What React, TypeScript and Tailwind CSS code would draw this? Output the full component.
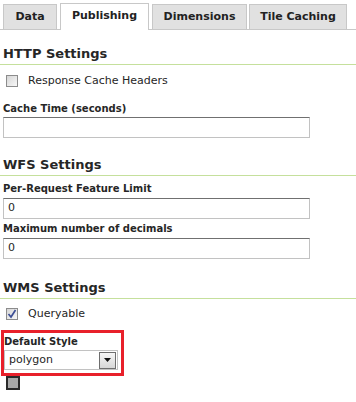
import React from "react";

const font = { fontFamily: '"DejaVu Sans", Verdana, sans-serif' };

function Heading({ children, mt }: { children: React.ReactNode; mt: string }) {
  return (
    <div className={`${mt} border-b border-[#c5e09c] pb-[2px] pl-[3px] text-[13px] font-bold text-[#262626] leading-[17px]`}>
      {children}
    </div>
  );
}

function Label({ children, mt }: { children: React.ReactNode; mt: string }) {
  return <div className={`${mt} pl-[3px] text-[10px] font-bold text-[#262626] leading-[14px]`}>{children}</div>;
}

function Input({ value, mt }: { value?: string; mt: string }) {
  return (
    <div className={`${mt} ml-[3px] w-[307px] h-[21px] border border-[#c2c2c2] border-t-[#707070] flex items-center pl-[4px] text-[11px] text-[#262626]`}>
      {value}
    </div>
  );
}

function Checkbox({ checked }: { checked?: boolean }) {
  return (
    <div className="w-[12px] h-[12px] border border-[#8c8c8c] bg-gradient-to-br from-[#d6d6d6] to-[#f8f8f8] flex items-center justify-center">
      {checked && (
        <svg width="10" height="10" viewBox="0 0 10 10">
          <path d="M1.5 5 L4 8 L8.5 1" stroke="#3d4f95" strokeWidth="1.7" fill="none" />
        </svg>
      )}
    </div>
  );
}

export default function App() {
  return (
    <div className="w-[356px] h-[402px] bg-white overflow-hidden" style={font}>
      <div className="flex items-start pt-[4px] h-[30px] border-b border-[#c8c8c8]">
        <div className="ml-[3px] w-[54px] h-[25px] bg-[#e1e1e1] border border-[#c8c8c8] border-b-0 flex items-center justify-center text-[11px] font-bold text-[#222]">
          Data
        </div>
        <div className="relative z-10 ml-[3px] -mt-[1px] w-[89px] h-[27px] bg-white border border-[#c8c8c8] border-b-0 flex items-center justify-center pb-[1px] text-[11px] font-bold text-[#222]">
          Publishing
        </div>
        <div className="ml-[3px] w-[95px] h-[25px] bg-[#e1e1e1] border border-[#c8c8c8] border-b-0 flex items-center justify-center text-[11px] font-bold text-[#222]">
          Dimensions
        </div>
        <div className="ml-[2px] w-[98px] h-[25px] bg-[#e1e1e1] border border-[#c8c8c8] border-b-0 flex items-center justify-center text-[11px] font-bold text-[#222]">
          Tile Caching
        </div>
      </div>

      <Heading mt="mt-[15px]">HTTP Settings</Heading>
      <div className="mt-[3px] h-[26px] flex items-center pl-[6px]">
        <Checkbox />
        <span className="ml-[10px] text-[11px] text-[#262626]">Response Cache Headers</span>
      </div>
      <Label mt="mt-[8px]">Cache Time (seconds)</Label>
      <Input mt="mt-[1px]" />

      <Heading mt="mt-[18px]">WFS Settings</Heading>
      <Label mt="mt-[6px]">Per-Request Feature Limit</Label>
      <Input mt="mt-[2px]" value="0" />
      <Label mt="mt-[3px]">Maximum number of decimals</Label>
      <Input mt="mt-[2px]" value="0" />

      <Heading mt="mt-[20px]">WMS Settings</Heading>
      <div className="mt-[2px] h-[26px] flex items-center pl-[6px]">
        <Checkbox checked />
        <span className="ml-[10px] text-[11px] text-[#262626]">Queryable</span>
      </div>
      <div className="mt-[3px] ml-[1px] w-[123px] h-[46px] border-[3px] border-[#e8202a] pt-[2px]">
        <div className="text-[10px] font-bold text-[#262626] leading-[14px]">Default Style</div>
        <div className="mt-[1px] w-[114px] h-[20px] border border-[#c2c2c2] flex items-center justify-between">
          <span className="pl-[4px] text-[11px] text-[#262626]">polygon</span>
          <div className="w-[17px] h-[17px] mr-[1px] border border-[#6e6e6e] bg-gradient-to-b from-[#f6f6f6] to-[#d6d6d6] flex items-center justify-center">
            <svg width="7" height="4" viewBox="0 0 7 4">
              <path d="M0 0 H7 L3.5 4 Z" fill="#111" />
            </svg>
          </div>
        </div>
      </div>
      <div className="ml-[6px] w-[14px] h-[14px] border-2 border-[#2a2a2a] bg-[#a9a9a9]" />
    </div>
  );
}
